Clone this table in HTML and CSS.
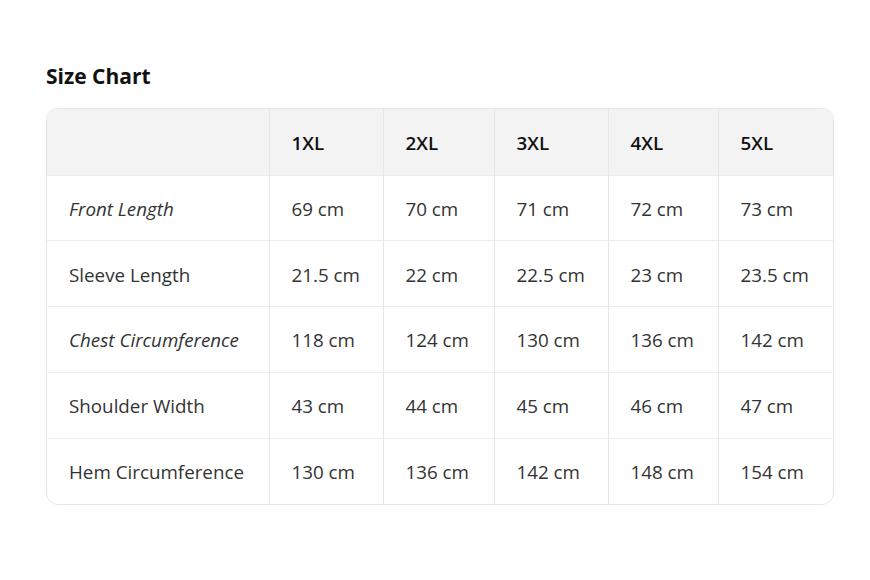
FILE: index.html
```html
<!DOCTYPE html>
<html>
<head>
<meta charset="utf-8">
<link rel="stylesheet" href="styles.css">
</head>
<body>
<div class="page">
  <h2 class="title">Size Chart</h2>
  <div class="card">
    <table class="chart">
      <colgroup>
        <col class="c0"><col class="c1"><col class="c2"><col class="c3"><col class="c4"><col class="c5">
      </colgroup>
      <thead>
        <tr><th></th><th>1XL</th><th>2XL</th><th>3XL</th><th>4XL</th><th>5XL</th></tr>
      </thead>
      <tbody>
        <tr><td class="em">Front Length</td><td>69 cm</td><td>70 cm</td><td>71 cm</td><td>72 cm</td><td>73 cm</td></tr>
        <tr><td>Sleeve Length</td><td>21.5 cm</td><td>22 cm</td><td>22.5 cm</td><td>23 cm</td><td>23.5 cm</td></tr>
        <tr><td class="em">Chest Circumference</td><td>118 cm</td><td>124 cm</td><td>130 cm</td><td>136 cm</td><td>142 cm</td></tr>
        <tr><td>Shoulder Width</td><td>43 cm</td><td>44 cm</td><td>45 cm</td><td>46 cm</td><td>47 cm</td></tr>
        <tr><td>Hem Circumference</td><td>130 cm</td><td>136 cm</td><td>142 cm</td><td>148 cm</td><td>154 cm</td></tr>
      </tbody>
    </table>
  </div>
</div>
</body>
</html>
```

FILE: styles.css
```css
html, body {
  margin: 0;
  padding: 0;
  background: #ffffff;
}
.page {
  padding: 62px 0 0 46px;
  font-family: "Open Sans", "Noto Sans", sans-serif;
  color: #333333;
}
.title {
  margin: 0 0 18px 0;
  font-size: 21px;
  font-weight: 700;
  color: #111111;
  line-height: 28px;
}
.card {
  width: 788px;
  border: 1px solid #e6e6e6;
  border-radius: 12px;
  overflow: hidden;
  box-sizing: border-box;
}
.chart {
  width: 100%;
  border-collapse: collapse;
  table-layout: fixed;
}
.c0 { width: 222px; }
.c1 { width: 114px; }
.c2 { width: 111px; }
.c3 { width: 114px; }
.c4 { width: 110px; }
.c5 { width: auto; }
.chart th, .chart td {
  height: 66px;
  box-sizing: border-box;
  padding: 2px 0 0 22px;
  text-align: left;
  font-size: 18.8px;
  border-left: 1px solid #e6e6e6;
  border-top: 1px solid #ececec;
  white-space: nowrap;
}
.chart tbody tr td {
  height: 65.8px;
}
.chart th:first-child, .chart td:first-child {
  border-left: none;
}
.chart thead tr th {
  border-top: none;
  background: #f3f3f3;
  color: #111111;
  font-weight: 600;
}
.chart td.em {
  font-style: italic;
}
```
